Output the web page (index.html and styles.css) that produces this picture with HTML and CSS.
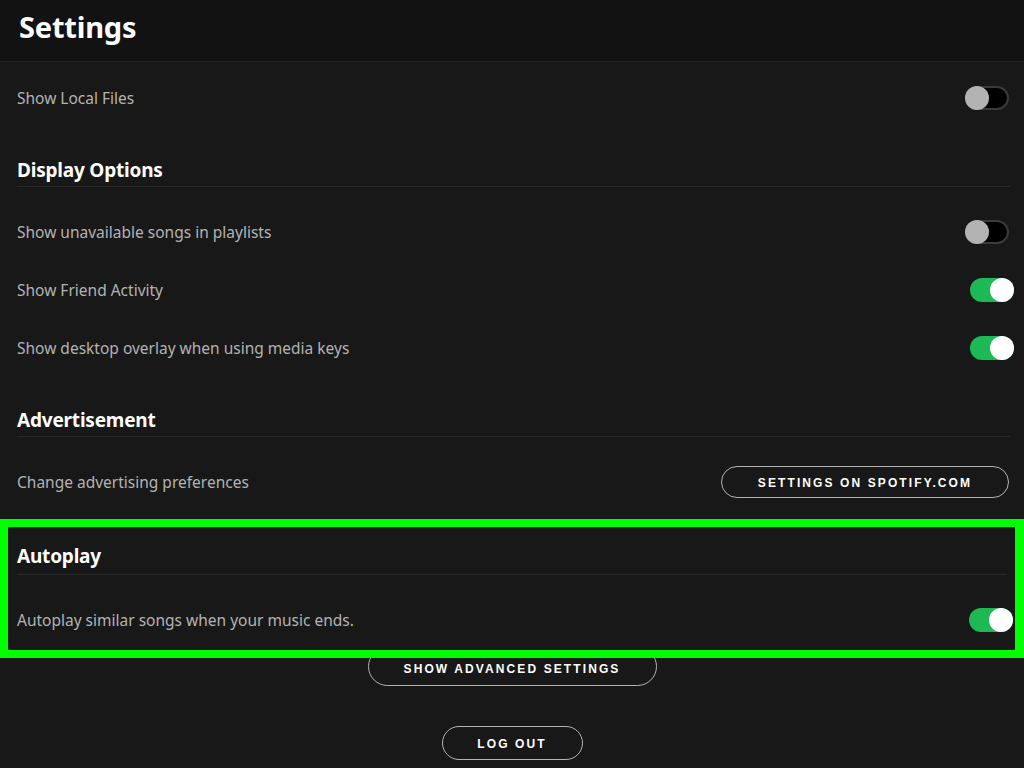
FILE: index.html
```html
<!DOCTYPE html>
<html>
<head>
<meta charset="utf-8">
<link rel="stylesheet" href="styles.css">
</head>
<body>
<header class="topbar"><h1 class="title">Settings</h1></header>
<main class="content">
  <div class="row">
    <span class="label">Show Local Files</span>
    <span class="toggle off"><span class="knob"></span></span>
  </div>

  <h2 class="section">Display Options</h2>
  <div class="row">
    <span class="label">Show unavailable songs in playlists</span>
    <span class="toggle off"><span class="knob"></span></span>
  </div>
  <div class="row">
    <span class="label">Show Friend Activity</span>
    <span class="toggle on"><span class="knob"></span></span>
  </div>
  <div class="row">
    <span class="label">Show desktop overlay when using media keys</span>
    <span class="toggle on"><span class="knob"></span></span>
  </div>

  <h2 class="section">Advertisement</h2>
  <div class="row">
    <span class="label">Change advertising preferences</span>
    <button class="pill wide">Settings on Spotify.com</button>
  </div>
</main>

<section class="highlight">
  <h2 class="section">Autoplay</h2>
  <div class="row short">
    <span class="label">Autoplay similar songs when your music ends.</span>
    <span class="toggle on"><span class="knob"></span></span>
  </div>
</section>

<div class="actions">
  <button class="pill advanced">Show Advanced Settings</button>
  <button class="pill logout">Log out</button>
</div>
</body>
</html>
```

FILE: styles.css
```css
html, body {
  margin: 0;
  padding: 0;
}
body {
  width: 1024px;
  height: 768px;
  overflow: hidden;
  background: #181818;
  color: #b3b3b3;
  font-family: "Noto Sans", "Liberation Sans", sans-serif;
}
.topbar {
  height: 61px;
  background: #121212;
  border-bottom: 1px solid #222;
  display: flex;
  align-items: center;
  padding-left: 19px;
}
.title {
  margin: 0 0 8px 0;
  font-size: 29px;
  font-weight: 700;
  color: #fff;
  letter-spacing: -0.2px;
}
.content {
  padding: 7px 14px 0 17px;
}
.row {
  height: 58px;
  display: flex;
  align-items: center;
  justify-content: space-between;
}
.label {
  font-size: 15.5px;
  color: #b3b3b3;
}
.section {
  margin: 0 0 16px 0;
  height: 60px;
  box-sizing: border-box;
  display: flex;
  align-items: flex-end;
  padding-bottom: 3px;
  font-size: 19px;
  font-weight: 700;
  color: #fff;
  letter-spacing: -0.2px;
  border-bottom: 1px solid #282828;
}
.toggle {
  position: relative;
  width: 44px;
  height: 24px;
  border-radius: 12px;
  box-sizing: border-box;
  flex: none;
}
.toggle.off {
  background: #000;
  border: 2px solid #3a3a3a;
  margin-right: 1px;
}
.toggle.on {
  background: #1db954;
  margin-right: -4px;
}
.knob {
  position: absolute;
  top: 50%;
  width: 24px;
  height: 24px;
  margin-top: -12px;
  border-radius: 50%;
}
.toggle.off .knob {
  left: -2px;
  background: #b3b3b3;
}
.toggle.on .knob {
  right: 0;
  background: #fff;
}
.pill {
  background: transparent;
  border: 1.5px solid #b3b3b3;
  border-radius: 500px;
  color: #fff;
  font-family: "Liberation Sans", Arial, sans-serif;
  font-weight: 700;
  font-size: 12px;
  letter-spacing: 2.1px;
  text-transform: uppercase;
  box-sizing: border-box;
  padding: 0;
}
.pill.wide {
  width: 288px;
  height: 32px;
  margin-right: 1px;
  padding-top: 1px;
}
.highlight {
  position: relative;
  z-index: 2;
  margin-top: 8px;
  border: 8px solid #00ff00;
  border-right-width: 9px;
  padding: 0 0 0 9px;
  height: 139px;
  box-sizing: border-box;
  background: #181818;
}
.highlight .section {
  height: 48px;
  margin-right: 0;
  margin-bottom: 16px;
  padding-bottom: 5px;
  width: 990px;
}
.highlight .row.short {
  height: 58px;
  width: 992px;
}
.actions {
  display: flex;
  flex-direction: column;
  align-items: center;
  margin-top: -11px;
  gap: 40px;
}
.pill.advanced {
  width: 289px;
  height: 39px;
  padding-top: 4px;
  position: relative;
  z-index: 1;
}
.pill.logout {
  width: 141px;
  height: 34px;
  padding-top: 1px;
}
```
